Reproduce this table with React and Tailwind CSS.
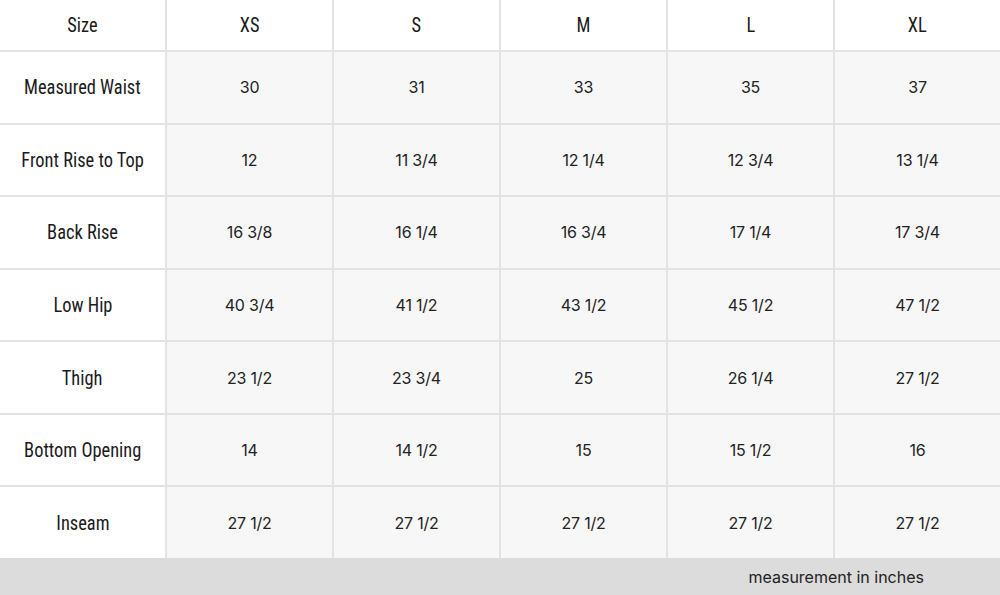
import React from "react";

const sizes = ["XS", "S", "M", "L", "XL"];
const rows = [
  ["Measured Waist", "30", "31", "33", "35", "37"],
  ["Front Rise to Top", "12", "11 3/4", "12 1/4", "12 3/4", "13 1/4"],
  ["Back Rise", "16 3/8", "16 1/4", "16 3/4", "17 1/4", "17 3/4"],
  ["Low Hip", "40 3/4", "41 1/2", "43 1/2", "45 1/2", "47 1/2"],
  ["Thigh", "23 1/2", "23 3/4", "25", "26 1/4", "27 1/2"],
  ["Bottom Opening", "14", "14 1/2", "15", "15 1/2", "16"],
  ["Inseam", "27 1/2", "27 1/2", "27 1/2", "27 1/2", "27 1/2"],
];

const condCls =
  "bg-white flex items-center justify-center text-[20px] text-[#1a1a1a] font-['Roboto_Condensed','Liberation_Sans_Narrow','DejaVu_Sans_Condensed',sans-serif]";
const numCls =
  "bg-[#f7f7f7] flex items-center justify-center text-[16px] tracking-[-0.2px] font-['Inter','Noto_Sans',sans-serif]";

function Cond({ children }) {
  return (
    <div className={condCls}>
      <span className="inline-block scale-x-[0.92] whitespace-nowrap">{children}</span>
    </div>
  );
}

export default function App() {
  return (
    <div className="w-[1000px] h-[595px] bg-white flex flex-col text-[#222]">
      <div className="h-[558px] grid grid-cols-6 grid-rows-[50px_repeat(7,1fr)] gap-[2px] bg-[#e3e3e3]">
        <Cond>Size</Cond>
        {sizes.map((s) => (
          <Cond key={s}>{s}</Cond>
        ))}
        {rows.map((r) => (
          <React.Fragment key={r[0]}>
            <Cond>{r[0]}</Cond>
            {r.slice(1).map((v, i) => (
              <div key={i} className={numCls}>{v}</div>
            ))}
          </React.Fragment>
        ))}
      </div>
      <div className="flex-1 bg-[#dcdcdc] flex items-center justify-end pr-[76px] text-[16px] font-['Inter','Noto_Sans',sans-serif]">
        measurement in inches
      </div>
    </div>
  );
}
